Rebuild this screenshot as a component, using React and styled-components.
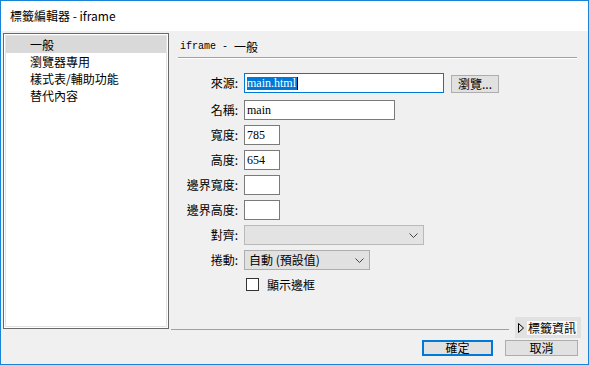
import React from 'react';
import styled, { createGlobalStyle } from 'styled-components';

const GlobalStyle = createGlobalStyle`
  html, body {
    margin: 0;
    padding: 0;
    background: #fff;
  }
  body {
    font-family: "Noto Sans CJK TC", "Noto Sans", sans-serif;
    font-size: 12px;
    color: #000;
  }
  * {
    box-sizing: border-box;
  }
`;

const Window = styled.div`
  width: 589px;
  height: 365px;
  border: 1px solid #1883d7;
  background: #f0f0f0;
  display: flex;
  flex-direction: column;
`;

const TitleBar = styled.div`
  height: 30px;
  flex-shrink: 0;
  background: #fff;
  display: flex;
  align-items: center;
  padding-left: 9px;
  font-size: 12px;
  line-height: 14px;
`;

const Content = styled.div`
  display: flex;
  height: 307px;
  flex-shrink: 0;
  padding: 2px 7px 0 2px;
`;

/* left category list */
const ListBox = styled.ul`
  list-style: none;
  margin: 0;
  width: 166px;
  height: 296px;
  padding: 2px;
  background: #fff;
  border: 1px solid #696969;
  box-shadow: inset 0 0 0 1px #fff, inset 0 0 0 2px #e3e3e3;
`;

const ListItem = styled.li`
  height: 17px;
  line-height: 17px;
  padding-left: 24px;
  background: ${(p) => (p.$active ? '#d9d9d9' : 'transparent')};
  white-space: nowrap;
`;

const RightPane = styled.div`
  flex: 1;
  margin-left: 2px;
  display: flex;
  flex-direction: column;
`;

const Header = styled.div`
  height: 25px;
  margin: 0 4px 0 7px;
  padding: 0 0 3px 2px;
  display: flex;
  align-items: flex-end;
  border-bottom: 1px solid #a0a0a0;
  box-shadow: 0 1px 0 #fff;
  line-height: 14px;
`;

const Mono = styled.span`
  font-family: "Liberation Mono", monospace;
  font-size: 10px;
  white-space: pre;
`;

const Form = styled.div`
  margin-top: 15px;
  display: grid;
  grid-template-columns: 67px auto;
  grid-template-rows: 22px repeat(8, 20px);
  column-gap: 6px;
  row-gap: 5px;
`;

const Label = styled.div`
  height: 20px;
  line-height: 20px;
  text-align: right;
  white-space: nowrap;
`;

const Field = styled.div`
  display: flex;
  align-items: flex-start;
`;

const TextBox = styled.div`
  width: ${(p) => p.$w}px;
  height: 20px;
  background: #fff;
  border: 1px solid ${(p) => (p.$focused ? '#0078d7' : '#7a7a7a')};
  padding: 0 0 0 2px;
  display: flex;
  align-items: center;
  font-family: "Liberation Serif", serif;
  font-size: 12px;
  line-height: 18px;
`;

const Selection = styled.span`
  background: #0078d7;
  color: #fff;
  line-height: 13px;
  padding-right: 1px;
  border-right: 1px solid #000;
`;

const SmallButton = styled.div`
  width: 48px;
  height: 18px;
  margin: 2px 0 0 7px;
  background: #e1e1e1;
  border: 1px solid #adadad;
  display: flex;
  align-items: center;
  justify-content: center;
  line-height: 14px;
`;

const Select = styled.div`
  width: ${(p) => p.$w}px;
  height: 20px;
  background: ${(p) => (p.$disabled ? '#e3e3e3' : '#e1e1e1')};
  border: 1px solid ${(p) => (p.$disabled ? '#b9b9b9' : '#adadad')};
  display: flex;
  align-items: center;
  justify-content: space-between;
  padding: 0 5px 0 4px;
  line-height: 14px;
`;

const CheckRow = styled.div`
  grid-column: 2;
  display: flex;
  align-items: center;
  gap: 8px;
  padding: 2px 0 0 2px;
  height: 17px;
  line-height: 14px;
`;

const CheckBox = styled.span`
  width: 13px;
  height: 13px;
  background: #fff;
  border: 1px solid #333;
`;

const Footer = styled.div`
  margin-top: auto;
  height: 21px;
  display: flex;
  align-items: flex-start;
`;

const Rule = styled.div`
  flex: 1;
  height: 1px;
  margin: 12px 6px 0 0;
  background: #a0a0a0;
`;

const TagInfo = styled.div`
  width: 66px;
  height: 21px;
  background: #e1e1e1;
  display: flex;
  align-items: center;
  padding: 0 3px;
  gap: 3px;
`;

const TagText = styled.span`
  background: #f8f8f8;
  line-height: 14px;
  padding: 0 1px;
`;

const ButtonRow = styled.div`
  margin-top: 2px;
  display: flex;
  justify-content: flex-end;
  gap: 12px;
  padding-right: 10px;
`;

const DialogButton = styled.div`
  width: ${(p) => p.$w}px;
  height: 16px;
  background: #e1e1e1;
  border: ${(p) => (p.$primary ? '2px solid #0078d7' : '1px solid #adadad')};
  display: flex;
  align-items: center;
  justify-content: center;
  line-height: 14px;
`;

const Chevron = () => (
  <svg width="9" height="5" viewBox="0 0 9 5">
    <polyline points="0.5,0.5 4.5,4.5 8.5,0.5" fill="none" stroke="#444" strokeWidth="1" />
  </svg>
);

const categories = ['一般', '瀏覽器專用', '樣式表/輔助功能', '替代內容'];

export default function App() {
  return (
    <>
      <GlobalStyle />
      <Window>
        <TitleBar>標籤編輯器 - iframe</TitleBar>
        <Content>
          <ListBox>
            {categories.map((c, i) => (
              <ListItem key={c} $active={i === 0}>
                {c}
              </ListItem>
            ))}
          </ListBox>
          <RightPane>
            <Header>
              <Mono>iframe - </Mono>一般
            </Header>
            <Form>
              <Label>來源:</Label>
              <Field>
                <TextBox $w={200} $focused>
                  <Selection>main.html</Selection>
                </TextBox>
                <SmallButton>瀏覽...</SmallButton>
              </Field>

              <Label>名稱:</Label>
              <Field>
                <TextBox $w={151}>main</TextBox>
              </Field>

              <Label>寬度:</Label>
              <Field>
                <TextBox $w={36}>785</TextBox>
              </Field>

              <Label>高度:</Label>
              <Field>
                <TextBox $w={36}>654</TextBox>
              </Field>

              <Label>邊界寬度:</Label>
              <Field>
                <TextBox $w={36} />
              </Field>

              <Label>邊界高度:</Label>
              <Field>
                <TextBox $w={36} />
              </Field>

              <Label>對齊:</Label>
              <Field>
                <Select $w={180} $disabled>
                  <span />
                  <Chevron />
                </Select>
              </Field>

              <Label>捲動:</Label>
              <Field>
                <Select $w={126}>
                  <span>自動 (預設值)</span>
                  <Chevron />
                </Select>
              </Field>

              <CheckRow>
                <CheckBox />
                <span>顯示邊框</span>
              </CheckRow>
            </Form>
            <Footer>
              <Rule />
              <TagInfo>
                <svg width="6" height="10" viewBox="0 0 6 10">
                  <polygon points="0.5,0.5 5.5,5 0.5,9.5" fill="none" stroke="#000" strokeWidth="1" />
                </svg>
                <TagText>標籤資訊</TagText>
              </TagInfo>
            </Footer>
          </RightPane>
        </Content>
        <ButtonRow>
          <DialogButton $w={71} $primary>確定</DialogButton>
          <DialogButton $w={73}>取消</DialogButton>
        </ButtonRow>
      </Window>
    </>
  );
}
